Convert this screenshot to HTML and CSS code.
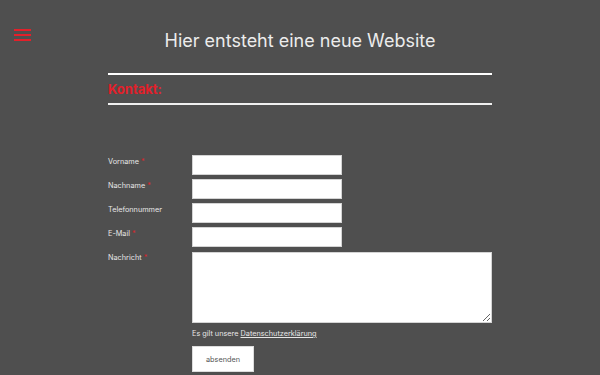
FILE: index.html
```html
<!DOCTYPE html>
<html lang="de">
<head>
    <meta charset="UTF-8" />
    <title>Hier entsteht eine neue Website</title>
    <link rel="stylesheet" href="styles.css">
</head>
<body>
    <a class="burger" href="#"><span></span><span></span><span></span></a>

    <div id="main">
        <h1 class="title">Hier entsteht eine neue Website</h1>

        <div class="section">
            <h2>Kontakt:</h2>
        </div>

        <form class="form">
            <label>Vorname <em>*</em></label>
            <input type="text">
            <label>Nachname <em>*</em></label>
            <input type="text">
            <label>Telefonnummer</label>
            <input type="text">
            <label>E-Mail <em>*</em></label>
            <input type="text">
            <label>Nachricht <em>*</em></label>
            <textarea></textarea>

            <p class="note">Es gilt unsere <a href="#">Datenschutzerklärung</a></p>
            <div class="send"><button type="button">absenden</button></div>
        </form>
    </div>
</body>
</html>
```

FILE: styles.css
```css
*{
    margin: 0;
    padding: 0;
    box-sizing: border-box;
}
html,body{
    width: 100%;
    height: 100%;
}
body{
    background-color: #4f4f4f;
    font-family: Inter, "Open Sans", sans-serif;
    color: #e8e8e8;
}

.burger{
    position: absolute;
    left: 14px;
    top: 29px;
    width: 17px;
    display: flex;
    flex-direction: column;
    gap: 3px;
}
.burger span{
    display: block;
    height: 2px;
    background-color: #e3202a;
}

#main{
    width: 384px;
    margin: 0 auto;
    padding-top: 30px;
}

.title{
    font-size: 18px;
    line-height: 22px;
    font-weight: 400;
    text-align: center;
    color: #ececec;
    margin-bottom: 21px;
}

.section{
    border-top: 2px solid #fff;
    border-bottom: 2px solid #f0f0f0;
    height: 32px;
    padding-top: 6px;
}
.section h2{
    font-size: 13px;
    line-height: 16px;
    font-weight: 700;
    color: #e3202a;
}

.form{
    display: grid;
    grid-template-columns: 84px 1fr;
    row-gap: 4px;
    margin-top: 50px;
    font-size: 7.3px;
}
.form label{
    padding-top: 2px;
    line-height: 10px;
    color: #e6e6e6;
}
.form em{
    font-style: normal;
    color: #d9262c;
}
.form input{
    width: 150px;
    height: 20px;
    border: 1px solid #d4d4d4;
    background-color: #fff;
}
.form textarea{
    width: 300px;
    height: 71px;
    border: 1px solid #d4d4d4;
    background-color: #fff;
    margin-top: 1px;
}
.note{
    grid-column: 2;
    margin-top: 2px;
    line-height: 10px;
    color: #e6e6e6;
}
.note a{
    color: #e6e6e6;
}
.send{
    grid-column: 2;
    margin-top: 3px;
}
.send button{
    width: 62px;
    height: 26px;
    background-color: #fff;
    border: 1px solid #ddd;
    font-family: inherit;
    font-size: 7.3px;
    color: #555;
}
```
